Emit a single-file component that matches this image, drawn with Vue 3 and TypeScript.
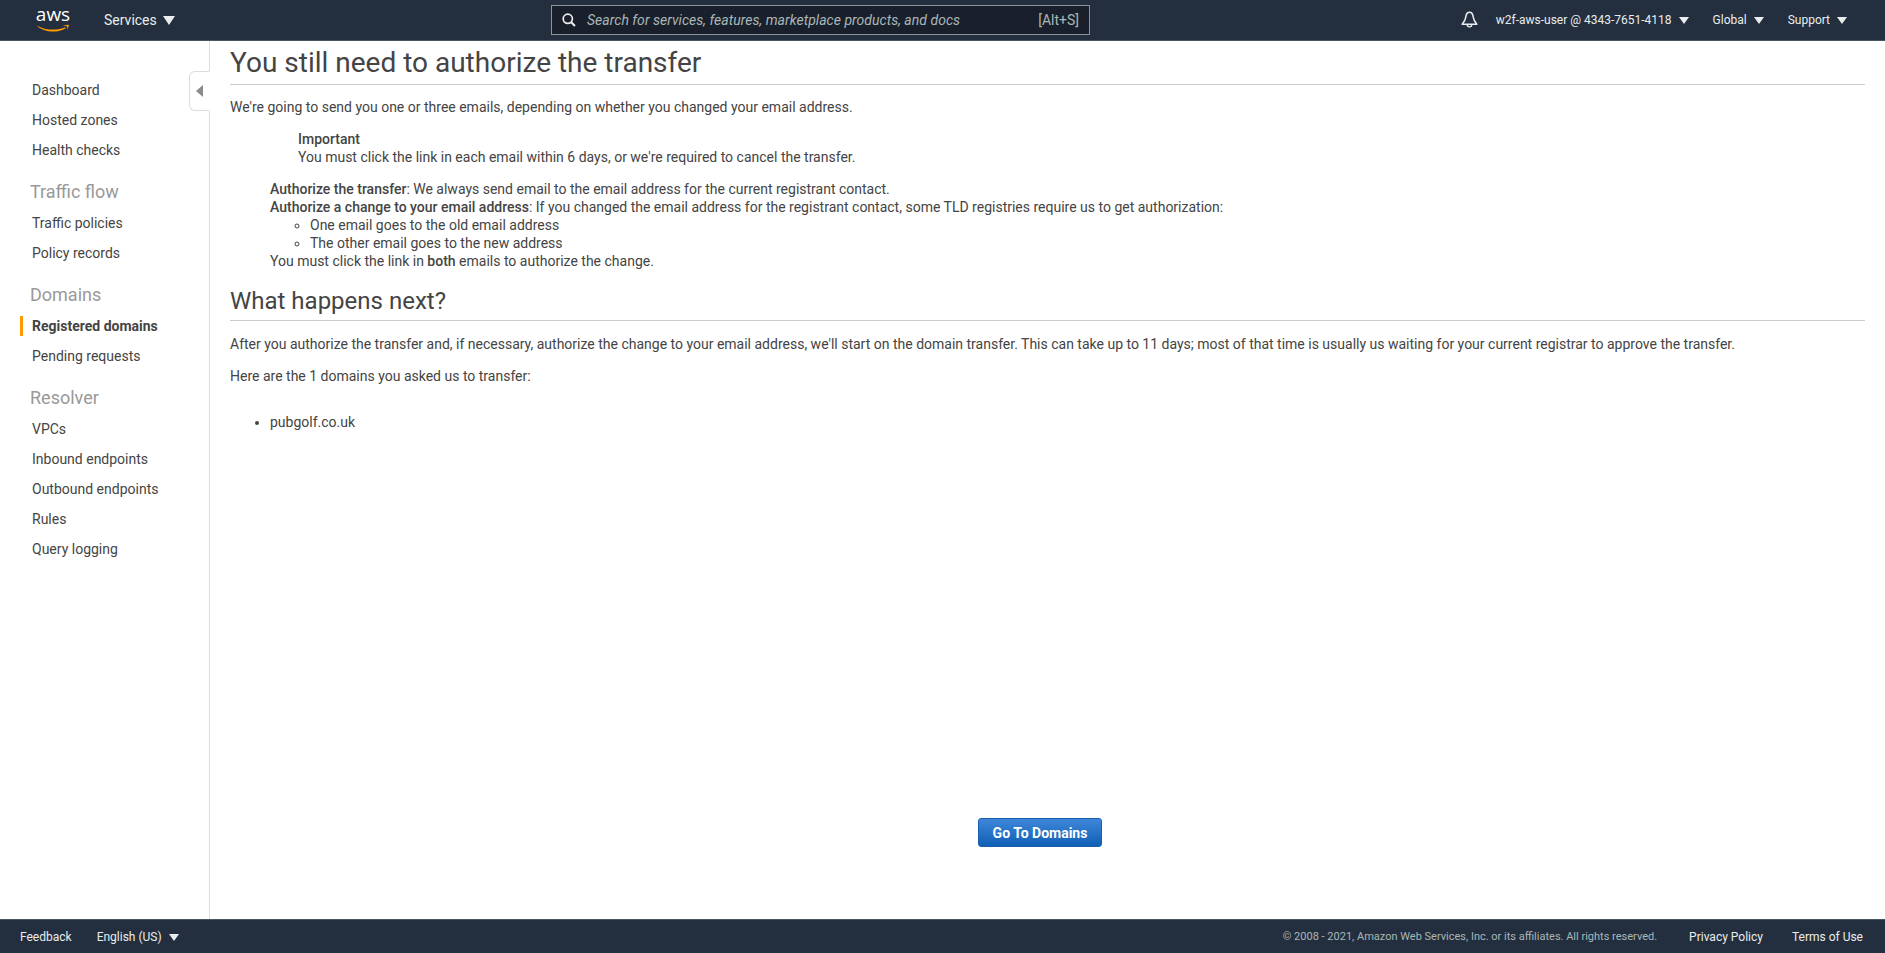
<template>
  <div class="console">
    <header class="top-nav">
      <div class="aws-logo">
        <span class="aws-word">aws</span>
        <svg class="smile" width="34" height="9" viewBox="0 0 34 9">
          <path d="M0.6 1.4C9 6.4 21 6.8 29.4 3.2L29.9 4.2C21 9.4 8 8.6 0.6 1.4Z" fill="#ff9900" />
          <path d="M26.5 1.2L33 0.8L31.4 6.6C31.6 4.8 31.6 3.2 31 2.4C30.2 1.8 28.4 1.6 26.5 1.2Z" fill="#ff9900" />
        </svg>
      </div>
      <div class="nav-item services">Services <i class="caret"></i></div>
      <div class="search">
        <svg width="14" height="14" viewBox="0 0 14 14">
          <circle cx="5.8" cy="5.8" r="4.6" fill="none" stroke="#eee" stroke-width="1.7" />
          <path d="M9.2 9.2L13 13" stroke="#eee" stroke-width="2" />
        </svg>
        <span class="search-text">Search for services, features, marketplace products, and docs</span>
        <span class="search-key">[Alt+S]</span>
      </div>
      <div class="nav-right">
        <svg class="bell" width="17" height="17" viewBox="0 0 17 17">
          <path d="M8.5 1.2C6.2 1.2 5.2 3 4.8 6C4.4 9 3.2 11 1.2 13.2H15.8C13.8 11 12.6 9 12.2 6C11.8 3 10.8 1.2 8.5 1.2Z" fill="none" stroke="#eaeded" stroke-width="1.6" stroke-linejoin="round" />
          <path d="M6.2 13.6C6.2 16.6 10.8 16.6 10.8 13.6" fill="none" stroke="#eaeded" stroke-width="1.4" />
        </svg>
        <div class="nav-item">w2f-aws-user @ 4343-7651-4118 <i class="caret"></i></div>
        <div class="nav-item">Global <i class="caret"></i></div>
        <div class="nav-item">Support <i class="caret"></i></div>
      </div>
    </header>

    <div class="body-row">
      <aside class="sidebar">
        <div class="collapse-tab"><i class="caret-left"></i></div>
        <nav v-for="group in navGroups" :key="group.title" class="nav-group">
          <h3 v-if="group.title">{{ group.title }}</h3>
          <a v-for="link in group.links" :key="link" :class="{ active: link === 'Registered domains' }">{{ link }}</a>
        </nav>
      </aside>

      <main class="content">
        <h1>You still need to authorize the transfer</h1>
        <p class="intro">We're going to send you one or three emails, depending on whether you changed your email address.</p>
        <div class="notice">
          <strong>Important</strong><br />
          You must click the link in each email within 6 days, or we're required to cancel the transfer.
        </div>
        <div class="details">
          <div><strong>Authorize the transfer</strong>: We always send email to the email address for the current registrant contact.</div>
          <div><strong>Authorize a change to your email address</strong>: If you changed the email address for the registrant contact, some TLD registries require us to get authorization:</div>
          <ul>
            <li>One email goes to the old email address</li>
            <li>The other email goes to the new address</li>
          </ul>
          <div>You must click the link in <strong>both</strong> emails to authorize the change.</div>
        </div>
        <h2>What happens next?</h2>
        <p class="next">After you authorize the transfer and, if necessary, authorize the change to your email address, we'll start on the domain transfer. This can take up to 11 days; most of that time is usually us waiting for your current registrar to approve the transfer.</p>
        <p class="asked">Here are the 1 domains you asked us to transfer:</p>
        <ul class="domains">
          <li v-for="domain in domains" :key="domain">{{ domain }}</li>
        </ul>
        <div class="actions">
          <button class="primary">Go To Domains</button>
        </div>
      </main>
    </div>

    <footer class="bottom-nav">
      <span class="foot-link">Feedback</span>
      <span class="foot-link lang">English (US) <i class="caret"></i></span>
      <span class="copyright">© 2008 - 2021, Amazon Web Services, Inc. or its affiliates. All rights reserved.</span>
      <span class="foot-link privacy">Privacy Policy</span>
      <span class="foot-link terms">Terms of Use</span>
    </footer>
  </div>
</template>

<script setup lang="ts">
interface NavGroup {
  title: string
  links: string[]
}

const navGroups: NavGroup[] = [
  { title: '', links: ['Dashboard', 'Hosted zones', 'Health checks'] },
  { title: 'Traffic flow', links: ['Traffic policies', 'Policy records'] },
  { title: 'Domains', links: ['Registered domains', 'Pending requests'] },
  { title: 'Resolver', links: ['VPCs', 'Inbound endpoints', 'Outbound endpoints', 'Rules', 'Query logging'] }
]

const domains: string[] = ['pubgolf.co.uk']
</script>

<style>
html,
body {
  margin: 0;
  background: #fff;
}
</style>

<style scoped>
.console {
  height: 953px;
  display: flex;
  flex-direction: column;
  overflow: hidden;
  font-family: Roboto, "Liberation Sans", sans-serif;
  font-size: 14px;
  color: #444;
}

/* top bar */
.top-nav {
  height: 39px;
  padding-bottom: 1px;
  flex-shrink: 0;
  display: flex;
  align-items: center;
  background: #232f3e;
  border-bottom: 1px solid #4a5563;
  color: #eaeded;
}

.aws-logo {
  width: 34px;
  margin-left: 36px;
  display: flex;
  flex-direction: column;
  align-items: center;
  height: 30px;
}

.aws-word {
  font-size: 19px;
  line-height: 19px;
  color: #fff;
  font-family: "Open Sans", sans-serif;
}

.nav-item {
  font-size: 12px;
  white-space: nowrap;
}

.services {
  font-size: 14px;
  margin-left: 34px;
  width: 447px;
}

.services .caret {
  margin-left: 3px;
  border-left-width: 6px;
  border-right-width: 6px;
  border-top-width: 9px;
}

.caret {
  display: inline-block;
  width: 0;
  height: 0;
  margin-left: 4px;
  border-left: 5px solid transparent;
  border-right: 5px solid transparent;
  border-top: 7px solid #eaeded;
  vertical-align: 0;
}

.search {
  width: 539px;
  height: 30px;
  box-sizing: border-box;
  margin-top: 1px;
  display: flex;
  align-items: center;
  padding: 0 10px;
  background: #19202b;
  border: 1px solid #8d949c;
  color: #aab7b8;
}

.search-text {
  flex: 1;
  margin-left: 11px;
  font-style: italic;
  letter-spacing: 0.03px;
}

.search-key {
  font-size: 14px;
}

.nav-right {
  margin-left: auto;
  display: flex;
  align-items: center;
  gap: 24px;
  padding-right: 38px;
}

.bell {
  margin-right: -6px;
}

/* sidebar */
.body-row {
  flex: 1;
  min-height: 0;
  display: flex;
}

.sidebar {
  width: 210px;
  flex-shrink: 0;
  box-sizing: border-box;
  position: relative;
  padding-top: 34px;
  border-right: 1px solid #ddd;
}

.collapse-tab {
  position: absolute;
  top: 30px;
  right: -1px;
  width: 21px;
  height: 40px;
  box-sizing: border-box;
  display: flex;
  align-items: center;
  justify-content: center;
  background: #fff;
  border: 1px solid #ddd;
  border-right-color: #fff;
  border-radius: 6px 0 0 6px;
}

.caret-left {
  width: 0;
  height: 0;
  border-top: 6px solid transparent;
  border-bottom: 6px solid transparent;
  border-right: 7px solid #8a8a8a;
}

.nav-group {
  margin-bottom: 12px;
}

.nav-group h3 {
  margin: 0;
  padding-left: 30px;
  padding-bottom: 2px;
  font-size: 18px;
  line-height: 29px;
  font-weight: 400;
  color: #999;
}

.nav-group a {
  display: block;
  height: 30px;
  line-height: 30px;
  padding-left: 32px;
  color: #444;
  position: relative;
}

.nav-group a.active {
  font-weight: 700;
}

.nav-group a.active::before {
  content: '';
  position: absolute;
  left: 20px;
  top: 5px;
  width: 3px;
  height: 20px;
  background: #ff9900;
}

/* main */
.content {
  flex: 1;
  min-width: 0;
  padding: 0 20px 0 20px;
  display: flex;
  flex-direction: column;
}

h1,
h2 {
  margin: 0;
  font-weight: 400;
  color: #444;
  border-bottom: 1px solid #ccc;
}

h1 {
  font-size: 28px;
  line-height: 43px;
}

h2 {
  font-size: 24px;
  line-height: 37px;
  margin-top: 13px;
}

.intro {
  margin: 12px 0 0;
  line-height: 20px;
}

.notice {
  margin: 13px 0 0 68px;
  line-height: 18px;
}

.notice strong,
.details strong {
  font-weight: 500;
}

.details {
  margin: 14px 0 0 40px;
  line-height: 18px;
}

.details ul {
  margin: 0;
  padding-left: 40px;
  list-style: circle;
}

.next {
  margin: 13px 0 0;
  line-height: 20px;
}

.asked {
  margin: 12px 0 0;
  line-height: 20px;
}

.domains {
  margin: 26px 0 0;
  padding-left: 40px;
  line-height: 20px;
}

.actions {
  margin-top: 386px;
  padding-right: 15px;
  display: flex;
  justify-content: center;
}

.primary {
  width: 124px;
  height: 29px;
  padding: 0;
  font-family: Roboto, "Liberation Sans", sans-serif;
  font-size: 14px;
  font-weight: 700;
  color: #fff;
  background: linear-gradient(#3f87d9, #0f5fb5);
  border: 1px solid #1a5fae;
  border-radius: 3px;
}

/* footer */
.bottom-nav {
  height: 34px;
  flex-shrink: 0;
  box-sizing: border-box;
  display: flex;
  align-items: center;
  padding: 0 22px 0 20px;
  background: #232f3e;
  border-top: 1px solid #4a5563;
  font-size: 12px;
  color: #eaeded;
}

.foot-link {
  white-space: nowrap;
}

.lang {
  margin-left: 25px;
}

.copyright {
  margin-left: auto;
  font-size: 11px;
  color: #aab7b8;
}

.privacy {
  margin-left: 32px;
}

.terms {
  margin-left: 29px;
}
</style>
